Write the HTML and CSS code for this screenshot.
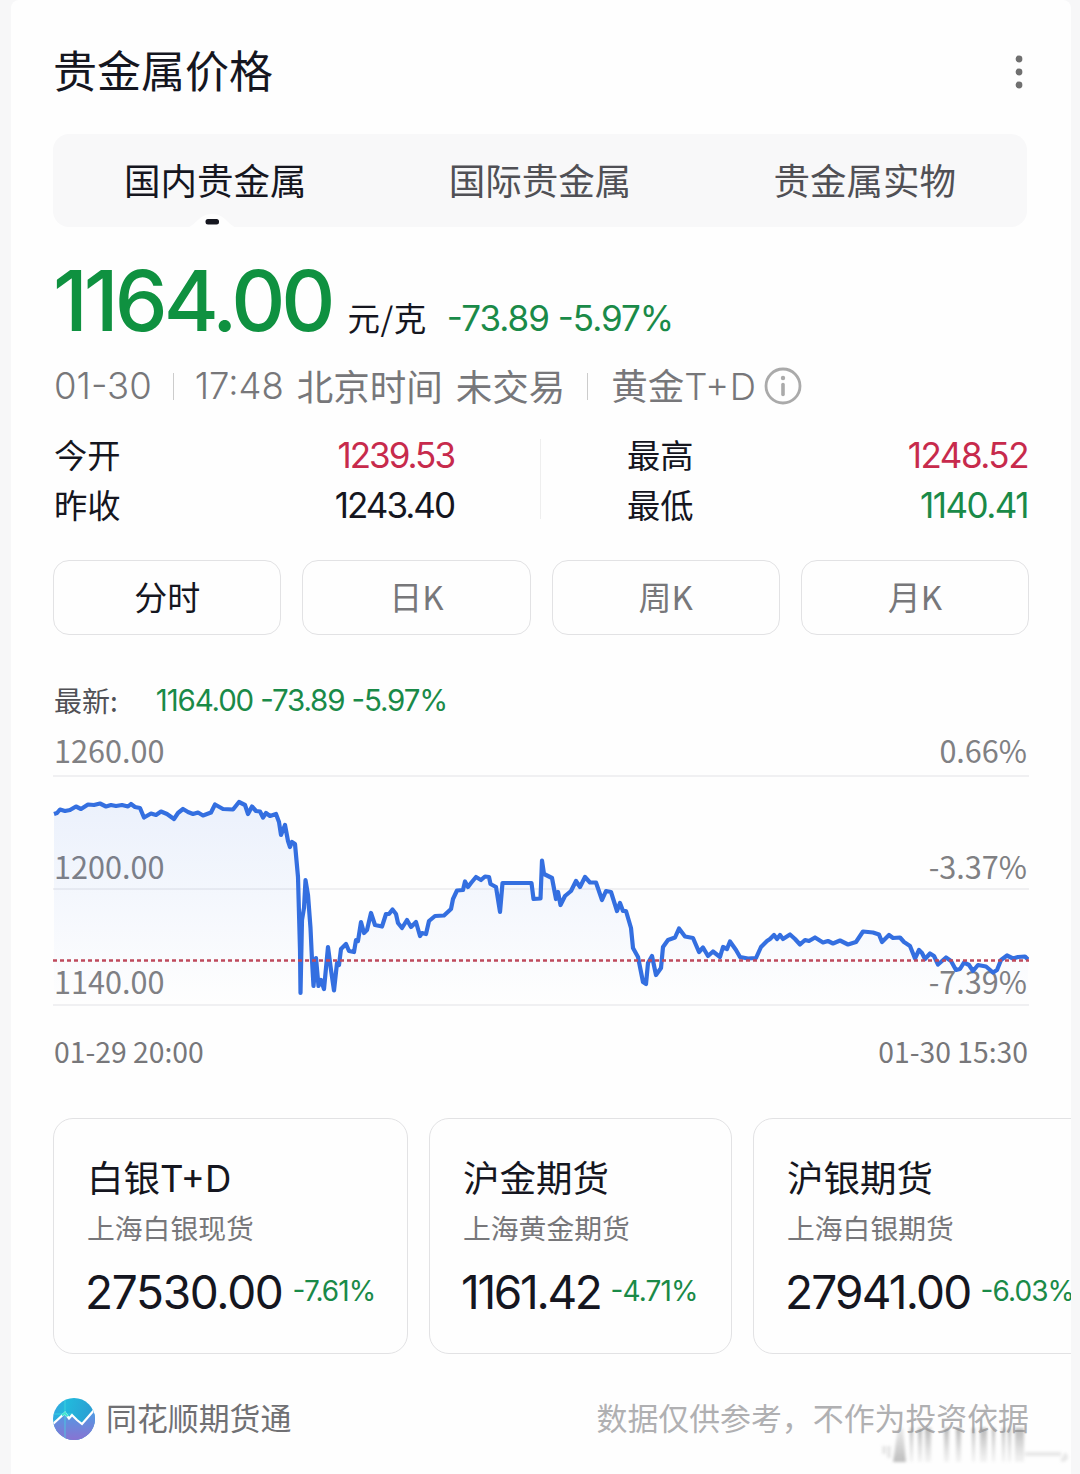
FILE: index.html
```
<!DOCTYPE html>
<html lang="zh-CN">
<head>
    <meta charset="UTF-8">
    <meta name="viewport" content="width=device-width, initial-scale=1.0">
    <title>贵金属价格</title>
    <link rel="stylesheet" href="styles.css">
</head>
<body>
    <div class="card">
        <div class="header">
            <h1>贵金属价格</h1>
            <svg class="more" width="8" height="34" viewBox="0 0 8 34">
                <circle cx="4" cy="4" r="3.4"/>
                <circle cx="4" cy="17" r="3.4"/>
                <circle cx="4" cy="30" r="3.4"/>
            </svg>
        </div>

        <div class="tabs">
            <div class="tab active">国内贵金属
                <svg class="notch" width="56" height="15" viewBox="0 0 56 15">
                    <path d="M0 15C12 15 13 1 28 1S44 15 56 15Z" fill="#fefefe"/>
                    <rect x="21.5" y="6" width="13.5" height="5.5" rx="2.5" fill="#15161f"/>
                </svg>
            </div>
            <div class="tab">国际贵金属</div>
            <div class="tab">贵金属实物</div>
        </div>

        <div class="price-row">
            <span class="price">1164.00</span>
            <span class="unit">元/克</span>
            <span class="change">-73.89 -5.97%</span>
        </div>

        <div class="meta">
            <span class="num date">01-30</span>
            <i class="sep"></i>
            <span class="num time">17:48</span>
            <span class="zone">北京时间</span>
            <span class="state">未交易</span>
            <i class="sep sep2"></i>
            <span>黄金<span class="num td">T+D</span></span>
            <svg class="info" width="38" height="38" viewBox="0 0 38 38">
                <circle cx="19" cy="19" r="17" fill="none" stroke="#aaa" stroke-width="2.8"/>
                <circle cx="19" cy="11" r="2.2" fill="#aaa"/>
                <path d="M19 17.500v10" stroke="#aaa" stroke-width="3.6" stroke-linecap="round"/>
            </svg>
        </div>

        <div class="stats">
            <div class="stats-col left">
                <div class="stat"><span>今开</span><span class="num up">1239.53</span></div>
                <div class="stat"><span>昨收</span><span class="num">1243.40</span></div>
            </div>
            <div class="stats-col right">
                <div class="stat"><span>最高</span><span class="num up">1248.52</span></div>
                <div class="stat"><span>最低</span><span class="num down">1140.41</span></div>
            </div>
        </div>

        <div class="periods">
            <button class="selected">分时</button>
            <button>日K</button>
            <button>周K</button>
            <button>月K</button>
        </div>

        <div class="latest">
            <span>最新:</span>
            <span class="latest-num">1164.00 -73.89 -5.97%</span>
        </div>

        <svg class="chart" width="976" height="289" viewBox="53 721 976 289">
            <defs>
                <linearGradient id="area" x1="0" y1="0" x2="0" y2="1">
                    <stop offset="0" stop-color="#2f6de6" stop-opacity="0.09"/>
                    <stop offset="1" stop-color="#2f6de6" stop-opacity="0"/>
                </linearGradient>
            </defs>
            <g class="grid">
                <path d="M53 776H1029M53 889H1029M53 1005H1029"/>
            </g>
            <g class="axis">
                <text x="54" y="763">1260.00</text>
                <text x="54" y="879">1200.00</text>
                <text x="54" y="994">1140.00</text>
                <text x="1027" y="763" text-anchor="end">0.66%</text>
                <text x="1027" y="879" text-anchor="end">-3.37%</text>
                <text x="1027" y="994" text-anchor="end">-7.39%</text>
            </g>
            <path id="fill" fill="url(#area)"/>
            <path id="line" class="line"/>
            <path class="current" d="M53 960.500H1029"/>
        </svg>
        <div class="times"><span>01-29 20:00</span><span>01-30 15:30</span></div>

        <div class="products">
            <div class="product p1">
                <h2>白银<span class="num">T+D</span></h2>
                <p>上海白银现货</p>
                <div class="quote"><span class="value">27530.00</span><span class="pct">-7.61%</span></div>
            </div>
            <div class="product p2">
                <h2>沪金期货</h2>
                <p>上海黄金期货</p>
                <div class="quote"><span class="value">1161.42</span><span class="pct">-4.71%</span></div>
            </div>
            <div class="product p3">
                <h2>沪银期货</h2>
                <p>上海白银期货</p>
                <div class="quote"><span class="value">27941.00</span><span class="pct">-6.03%</span></div>
            </div>
        </div>

        <div class="footer">
            <svg width="42" height="42" viewBox="0 0 42 42">
                <defs>
                    <linearGradient id="logoTop" x1="0" y1="0" x2="1" y2="0.3">
                        <stop offset="0" stop-color="#3a9fe0"/>
                        <stop offset="0.35" stop-color="#22b9dc"/>
                        <stop offset="1" stop-color="#2c9bd2"/>
                    </linearGradient>
                    <linearGradient id="logoBottom" x1="0" y1="0" x2="0" y2="1">
                        <stop offset="0" stop-color="#4a9fe6"/>
                        <stop offset="1" stop-color="#8873d2"/>
                    </linearGradient>
                    <clipPath id="round"><circle cx="21" cy="21" r="21"/></clipPath>
                </defs>
                <g clip-path="url(#round)">
                    <rect width="42" height="42" fill="url(#logoTop)"/>
                    <path d="M0 26L12 15L16 20L19 17L29 26L42 11V42H0Z" fill="url(#logoBottom)"/>
                    <path d="M12 0V42M0 16H20" stroke="#45dfe3" stroke-width="1" opacity="0.7"/>
                    <path d="M0 26L12 15L16 20.500L19 17L24 22L29 26L42 11" fill="none" stroke="#fff" stroke-width="2.2"/>
                    <path d="M9 17.500L12 15L14.500 18.500" fill="none" stroke="#3fe6cf" stroke-width="2"/>
                </g>
            </svg>
            <span class="brand">同花顺期货通</span>
            <span class="notice">数据仅供参考，不作为投资依据</span>
            <!-- faded streaks under the notice -->
            <svg class="streaks" width="190" height="40" viewBox="0 0 190 40">
                <defs>
                    <linearGradient id="fade" x1="0" y1="0" x2="0" y2="1">
                        <stop offset="0" stop-color="#888" stop-opacity="0.6"/>
                        <stop offset="1" stop-color="#aaa" stop-opacity="0.12"/>
                    </linearGradient>
                    <linearGradient id="rise" x1="0" y1="0" x2="0" y2="1">
                        <stop offset="0" stop-color="#999" stop-opacity="0.2"/>
                        <stop offset="1" stop-color="#888" stop-opacity="0.55"/>
                    </linearGradient>
                </defs>
                <path d="M17 0h5l3 34H12Z" fill="url(#rise)"/>
                <path d="M29 0h3v34h-3ZM37 0h4v34h-4ZM44 0h6v34h-6ZM63 0h5v34h-5ZM75 0h5v34h-5ZM91 0h3v34h-3ZM99 0h7v34h-7ZM111 0h3v34h-3ZM121 0h3v34h-3ZM127 0h3v34h-3ZM134 0h9v34h-9Z" fill="url(#fade)"/>
                <path d="M3 18v8M8 18v12M144 26h36M180 32q8 -1 3 -6" fill="none" stroke="#ccc" stroke-width="4" opacity="0.45"/>
            </svg>
        </div>
    </div>

    <script>
        const points = [
            [54,814],[57,813],[60,809.5],[65,811],[70,810],[76,806.5],[81,809],[88,804.5],[94,805],[100,803.5],[106,806.5],[111,805],[116,806],[122,805],[128,806.5],[131,804],[135,807],[140,808],[144,817.5],[151,813.5],[156,815],[161,811.5],[167,814],[174,819],[178,813],[183,809],[188,812],[193,814],[198,812.5],[203,815.5],[211,812.5],[215,804.5],[223,809],[233,809.5],[239,802],[245,805],[248,814],[252,806.5],[256,811],[260,811.5],[263,817.5],[266,813],[270,816],[276,814],[279,822],[281,835],[285,825],[288,841],[290,847],[292,842],[295,844],[298,877],[300,950],[300.5,993],[302,920],[304,908],[305.5,880],[308,895],[310.5,928],[312,960],[313.5,986],[316,958],[318.5,986],[321,980],[324,989],[328,947],[331,970],[334,990.5],[337,963],[339,965],[341,949],[346,944],[349,951],[354,952],[356,940],[358,941],[361,922],[364,933],[367,930],
            [371,913],[375,925],[382,926.5],[386,914],[389,914],[392.5,909.5],[396,914],[398,923],[402,928],[407,920],[411,927],[416,922],[420,936],[422,933],[426,934],[429,921],[435,916],[444,915.5],[451,909],[453,899],[457,890.5],[463,890],[465,881.5],[468,887],[471,883],[476,877],[481,880],[485,876.5],[489,877],[490.5,884],[496,887],[500,912],[502.5,883],[531.5,883],[533.5,899],[540.5,898.5],[542,860.5],[544,874],[552,878],[556,899],[558,892],[560.5,905],[565,896],[571,891],[576,881],[580,887],[585,877],[590,882.5],[596,882.5],[602,900],[606,891],[611,892],[617,911],[620,903],[623,911],[626,911],[631,928],[633,948],[638,957],[643,982],[646,984],[648,963],[652,956],[656,975],[661,968],[663,947],[668,940],[675,937.5],[679,928.5],[685,936.5],[693,938],[699,952],
            [703,947.5],[708,956],[713,951.5],[720,957],[723,947],[727,949],[730,941.5],[736,950],[740,957],[748,958.5],[756,958],[761,947],[767,941],[770,939],[774,935],[777,939],[780,935],[783,939],[790,934.5],[795,939],[800,944.5],[805,940],[809,941],[815,937.5],[823,942.5],[828,941],[833,943.5],[840,940.5],[848,944.5],[856,942],[863,931.5],[873,932.5],[879,934.5],[882,942],[889,935],[893,938],[900,937.5],[904,942],[910,946],[915,958.5],[919,950],[922,953],[925,959],[930,953.5],[934,956],[938,964.5],[946,957.5],[951,961],[956,970],[960,969],[964,962.5],[969,965],[973,971],[978,965],[986,966.5],[993,972.5],[997,970],[1001,960],[1007,955.5],[1013,958.5],[1018,957],[1025,956.5],[1028,959.5]
        ];
        const d = 'M' + points.map(p => p.join(' ')).join('L');
        document.getElementById('line').setAttribute('d', d);
        document.getElementById('fill').setAttribute('d', d + 'V1005H54Z');
    </script>
</body>
</html>
```
FILE: styles.css
```
body {
    background-color: #f7f7f8;
    font-family: 'Noto Sans CJK SC', sans-serif;
    margin: 0;
    color: #15161f;
}

.card {
    background-color: #fefefe;
    box-sizing: border-box;
    height: 1474px;
    margin: 0 9px 0 11px;
    padding: 40px 42px 0;
    border-radius: 8px 8px 0 0;
    overflow: hidden;
}

h1, h2, p {
    margin: 0;
    font-weight: 400;
}

.num, .price, .change, .latest-num, .value, .pct {
    font-family: Inter, 'Noto Sans CJK SC', sans-serif;
    font-feature-settings: 'case';
    font-weight: 400;
    white-space: nowrap;
}

.header {
    display: flex;
    justify-content: space-between;
    align-items: center;
    height: 60px;
}

h1 {
    font-size: 44px;
    line-height: 60px;
    margin-top: -2px;
}

.more {
    margin: 4px 6px 0 0;
    fill: #707070;
}

.tabs {
    display: flex;
    width: 974px;
    height: 93px;
    margin-top: 34px;
    border-radius: 16px;
    background-color: #f8f8f9;
}

.tab {
    position: relative;
    flex: 1;
    text-align: center;
    font-size: 36.5px;
    line-height: 92px;
    color: #505055;
}

.tab.active {
    color: #15161f;
}

.notch {
    position: absolute;
    left: 131px;
    bottom: -1px;
}

.price-row {
    display: flex;
    align-items: baseline;
    height: 100px;
    margin-top: 24px;
}

.price {
    font-size: 84px;
    line-height: 100px;
    font-weight: 500;
    color: #0f9140;
    letter-spacing: -4px;
}

.unit {
    font-size: 32.5px;
    line-height: 40px;
    margin-left: 16px;
    letter-spacing: 0.5px;
}

.change {
    font-size: 35px;
    line-height: 40px;
    color: #1a8a48;
    margin-left: 20px;
    letter-spacing: -1px;
}

.meta {
    display: flex;
    align-items: center;
    height: 50px;
    margin-top: 10px;
    font-size: 36.5px;
    line-height: 50px;
    color: #77777a;
}

.meta .num {
    font-weight: 300;
}

.date {
    margin-left: 1px;
}

.td {
    letter-spacing: 0.5px;
}

.sep {
    width: 1px;
    height: 27px;
    background-color: #ccc;
    margin: 0 21px;
}

.sep2 {
    margin: 0 23px 0 22px;
}

.zone {
    margin-left: 13px;
}

.state {
    margin-left: 13px;
}

.info {
    margin-left: 8px;
}

.stats {
    display: flex;
    margin-top: 18px;
    font-size: 33.3px;
    line-height: 50px;
}

.stats-col.left {
    width: 400px;
    padding: 0 87px 0 1px;
    background: linear-gradient(#eee, #eee) no-repeat right center / 1px 80px;
}

.stats-col.right {
    flex: 1;
    padding: 0 1px 0 86px;
}

.stat {
    display: flex;
    justify-content: space-between;
    height: 50px;
}

.stat .num {
    font-size: 35px;
    line-height: 52px;
    letter-spacing: -2px;
}

.right .num {
    letter-spacing: -1.5px;
}

.up {
    color: #c72a4c;
}

.down {
    color: #1a8a48;
}

.periods {
    display: grid;
    grid-template-columns: repeat(4, 1fr);
    gap: 21px;
    margin-top: 31px;
}

.periods button {
    height: 75px;
    padding: 0 0 4px;
    border: 1px solid #e2e2e4;
    border-radius: 16px;
    background: none;
    font-family: inherit;
    font-size: 33px;
    color: #77777a;
}

.periods .selected {
    color: #15161f;
}

.latest {
    display: flex;
    gap: 38px;
    height: 42px;
    margin-top: 44px;
    padding-left: 1px;
    font-size: 28px;
    line-height: 42px;
    color: #505055;
}

.latest-num {
    font-size: 29.5px;
    line-height: 43px;
    color: #1a8a48;
    letter-spacing: -1.15px;
}

.chart {
    display: block;
}

.grid path {
    stroke: #f0f0f2;
    stroke-width: 2;
}

.axis text {
    font-size: 30.6px;
    fill: #808083;
}

.line {
    fill: none;
    stroke: #346fe0;
    stroke-width: 4.2;
    stroke-linejoin: round;
}

.current {
    stroke: #bf4a5c;
    stroke-width: 2.5;
    stroke-dasharray: 4 3;
}

.times {
    display: flex;
    justify-content: space-between;
    margin-top: 20px;
    padding: 0 1px;
    font-size: 28.3px;
    line-height: 42px;
    color: #77777a;
}

.products {
    display: flex;
    gap: 21px;
    margin: 46px -42px 0 0;
    overflow: hidden;
}

.product {
    box-sizing: border-box;
    flex: none;
    height: 236px;
    padding: 33px 0 0 33px;
    border: 1px solid #e2e2e4;
    border-radius: 20px;
}

.p1 {
    width: 355px;
}

.p2 {
    width: 303px;
}

.p3 {
    width: 355px;
}

h2 {
    height: 50px;
    font-size: 36.5px;
    line-height: 50px;
}

.product p {
    font-size: 27.8px;
    line-height: 50px;
    color: #77777a;
}

.quote {
    display: flex;
    align-items: center;
    gap: 10px;
    height: 60px;
    margin-top: 10px;
}

.value {
    margin-left: -2px;
    font-size: 46px;
    letter-spacing: -1.3px;
}

.pct {
    margin-top: -2px;
    font-size: 28px;
    color: #1a8a48;
    letter-spacing: -0.9px;
}

.p2 .value {
    letter-spacing: -2.3px;
}

.p3 .value {
    letter-spacing: -1.8px;
}

.footer {
    position: relative;
    display: flex;
    align-items: center;
    height: 44px;
    margin-top: 43px;
    font-size: 30.9px;
    line-height: 40px;
}

.brand {
    margin: -4px 0 0 11px;
    color: #707073;
}

.notice {
    margin: -4px 0 0 auto;
    color: #b0b0b2;
}

.streaks {
    position: absolute;
    right: -42px;
    top: 31px;
    filter: blur(1.5px);
}
```
